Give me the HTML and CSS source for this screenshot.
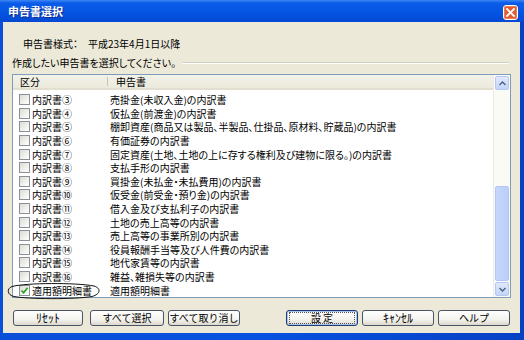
FILE: index.html
```html
<!DOCTYPE html>
<html lang="ja">
<head>
    <meta charset="UTF-8">
    <title>申告書選択</title>
    <link rel="stylesheet" href="styles.css">
</head>
<body>
    <div class="window">
        <!-- タイトルバー -->
        <div class="titlebar">
            <span class="title">申告書選択</span>
            <svg class="close" width="15" height="15" viewBox="0 0 15 15">
                <rect x="0.5" y="0.5" width="14" height="14" rx="2.5" fill="#e35b31" stroke="#fff"/>
                <rect x="1.5" y="1.5" width="12" height="12" rx="1.5" fill="none" stroke="#ef8a62" stroke-width="0.8"/>
                <path d="M4 4 L11 11 M11 4 L4 11" stroke="#fff" stroke-width="1.8" stroke-linecap="round"/>
            </svg>
        </div>

        <div class="client">
            <div class="info">
                <span class="info-label">申告書様式：</span>
                <span>平成23年4月1日以降</span>
            </div>
            <div class="prompt">
                <span>作成したい申告書を選択してください。</span>
                <div class="groove"></div>
            </div>

            <!-- 申告書一覧 -->
            <div class="listbox">
                <div class="list-main">
                    <div class="list-head">
                        <div class="head-kubun">区分</div>
                        <div class="head-name">申告書</div>
                    </div>
                    <div class="rows">
                        <div class="row"><span class="check"></span><span class="kubun">内訳書③</span><span class="name">売掛金(未収入金)の内訳書</span></div>
                        <div class="row"><span class="check"></span><span class="kubun">内訳書④</span><span class="name">仮払金(前渡金)の内訳書</span></div>
                        <div class="row"><span class="check"></span><span class="kubun">内訳書⑤</span><span class="name">棚卸資産(商品又は製品、半製品、仕掛品、原材料、貯蔵品)の内訳書</span></div>
                        <div class="row"><span class="check"></span><span class="kubun">内訳書⑥</span><span class="name">有価証券の内訳書</span></div>
                        <div class="row"><span class="check"></span><span class="kubun">内訳書⑦</span><span class="name">固定資産(土地、土地の上に存する権利及び建物に限る。)の内訳書</span></div>
                        <div class="row"><span class="check"></span><span class="kubun">内訳書⑧</span><span class="name">支払手形の内訳書</span></div>
                        <div class="row"><span class="check"></span><span class="kubun">内訳書⑨</span><span class="name">買掛金(未払金・未払費用)の内訳書</span></div>
                        <div class="row"><span class="check"></span><span class="kubun">内訳書⑩</span><span class="name">仮受金(前受金・預り金)の内訳書</span></div>
                        <div class="row"><span class="check"></span><span class="kubun">内訳書⑪</span><span class="name">借入金及び支払利子の内訳書</span></div>
                        <div class="row"><span class="check"></span><span class="kubun">内訳書⑫</span><span class="name">土地の売上高等の内訳書</span></div>
                        <div class="row"><span class="check"></span><span class="kubun">内訳書⑬</span><span class="name">売上高等の事業所別の内訳書</span></div>
                        <div class="row"><span class="check"></span><span class="kubun">内訳書⑭</span><span class="name">役員報酬手当等及び人件費の内訳書</span></div>
                        <div class="row"><span class="check"></span><span class="kubun">内訳書⑮</span><span class="name">地代家賃等の内訳書</span></div>
                        <div class="row"><span class="check"></span><span class="kubun">内訳書⑯</span><span class="name">雑益、雑損失等の内訳書</span></div>
                        <div class="row">
                            <span class="check checked">
                                <svg width="9" height="9" viewBox="0 0 9 9"><path d="M1.5 4.5 L3.6 6.8 L7.6 1.8" fill="none" stroke="#21a121" stroke-width="1.6"/></svg>
                            </span>
                            <span class="kubun">適用額明細書</span><span class="name">適用額明細書</span>
                        </div>
                    </div>
                </div>

                <!-- スクロールバー -->
                <div class="scrollbar">
                    <div class="sb-btn">
                        <svg width="7" height="5" viewBox="0 0 7 5"><path d="M0.5 4 L3.5 1 L6.5 4" fill="none" stroke="#4d6185" stroke-width="1.4"/></svg>
                    </div>
                    <div class="sb-track"><div class="sb-thumb"></div></div>
                    <div class="sb-btn">
                        <svg width="7" height="5" viewBox="0 0 7 5"><path d="M0.5 1 L3.5 4 L6.5 1" fill="none" stroke="#4d6185" stroke-width="1.4"/></svg>
                    </div>
                </div>
            </div>

            <div class="buttons">
                <div class="btn-group">
                    <button class="btn btn-reset hankaku">ﾘｾｯﾄ</button>
                    <button class="btn btn-wide">すべて選択</button>
                    <button class="btn">すべて取り消し</button>
                </div>
                <div class="btn-group">
                    <button class="btn btn-default"><span class="focus">設 定</span></button>
                    <button class="btn hankaku">ｷｬﾝｾﾙ</button>
                    <button class="btn">ヘルプ</button>
                </div>
            </div>
        </div>

        <!-- 手書きの丸印 -->
        <svg class="mark" width="96" height="18" viewBox="0 0 96 18">
            <path d="M6 4.5 C20 0.8 70 0.5 88 4 C95 6 95 12 86 14.5 C68 17.5 22 17.2 8 14.5 C1 13 0.5 6.5 6 4.5" fill="none" stroke="#111" stroke-width="1"/>
        </svg>
    </div>
</body>
</html>
```

FILE: styles.css
```css
/* 全体 */
body {
    margin: 0;
    font-family: "Noto Sans CJK JP", sans-serif;
    font-size: 10px;
    color: #000;
}

.window {
    position: relative;
    width: 524px;
    height: 340px;
    display: flex;
    flex-direction: column;
    background: linear-gradient(to right, #0a4fd8, #0752e0 50%, #0641c4);
}

/* タイトルバー */
.titlebar {
    height: 22px;
    display: flex;
    align-items: center;
    justify-content: space-between;
    padding: 0 6px 0 8px;
    background: linear-gradient(#3d86f4 0, #0a5ce8 3px, #0555e2 55%, #0448d2 100%);
}

.title {
    color: #fff;
    font-weight: bold;
    font-size: 11px;
    text-shadow: 1px 1px 0 #0b2a8a;
}

.close {
    display: block;
    margin-top: 3px;
}

/* クライアント領域 */
.client {
    flex: 1;
    margin: 0 4px 7px 3px;
    padding: 15px 0 7px 0;
    background-color: #ece9d8;
    display: flex;
    flex-direction: column;
}

.info {
    height: 14px;
    line-height: 14px;
    padding-left: 20px;
    display: flex;
    font-feature-settings: "palt";
}

.info-label {
    width: 65px;
}

.prompt {
    height: 14px;
    line-height: 14px;
    margin-top: 5px;
    padding-left: 9px;
    display: flex;
    align-items: center;
    font-feature-settings: "palt";
}

.groove {
    flex: 1;
    margin: 0 11px 0 6px;
    border-top: 1px solid #d0d0bf;
    border-bottom: 1px solid #fff;
}

/* 一覧 */
.listbox {
    height: 224px;
    margin: 4px 9px 0 9px;
    box-sizing: border-box;
    border: 1px solid #7f9db9;
    background-color: #fff;
    display: flex;
}

.list-main {
    flex: 1;
    overflow: hidden;
}

.list-head {
    height: 15px;
    display: flex;
    background: linear-gradient(#f3f2ea, #ebeadb);
    border-bottom: 2px solid #e2dfd0;
    box-sizing: border-box;
    line-height: 13px;
}

.head-kubun {
    width: 87px;
    padding-left: 7px;
    border-right: 1px solid #c7c5b2;
    margin: 2px 0;
    line-height: 9px;
}

.head-name {
    padding-left: 8px;
}

.rows {
    padding-top: 3px;
}

.row {
    height: 13.6px;
    display: flex;
    align-items: center;
    white-space: nowrap;
}

.check {
    width: 11px;
    height: 11px;
    margin-left: 6px;
    margin-right: 2px;
    box-sizing: border-box;
    border: 1px solid #8b8f98;
    background: linear-gradient(135deg, #dcdcd4, #fff);
    display: flex;
    align-items: center;
    justify-content: center;
}

.kubun {
    width: 78px;
}

.name {
    font-feature-settings: "palt";
}

/* スクロールバー */
.scrollbar {
    width: 17px;
    display: flex;
    flex-direction: column;
    background-color: #fbfbf6;
    border-left: 1px solid #eeede5;
    box-sizing: border-box;
}

.sb-btn {
    height: 12px;
    margin: 1px 1px;
    border: 1px solid #b5c8f2;
    border-radius: 2px;
    background: linear-gradient(#e0e9fd, #c4d5fa);
    display: flex;
    align-items: center;
    justify-content: center;
}

.sb-track {
    flex: 1;
    display: flex;
    flex-direction: column;
    justify-content: flex-end;
}

.sb-thumb {
    height: 93px;
    margin: 0 1px;
    border: 1px solid #b1c6f4;
    border-radius: 2px;
    background: linear-gradient(to right, #c6d6fb, #bccffa);
}

/* ボタン */
.buttons {
    height: 16px;
    margin: 12px 10px 0 10px;
    display: flex;
    justify-content: space-between;
}

.btn-group {
    display: flex;
    gap: 4px;
}

.btn {
    width: 72px;
    height: 16px;
    padding: 0;
    font-family: "Noto Sans CJK JP", sans-serif;
    font-size: 10px;
    line-height: 14px;
    color: #000;
    border: 1px solid #4a5368;
    border-radius: 3px;
    background: linear-gradient(#ffffff, #f4f3ee 60%, #dcd8cc);
}

.hankaku {
    font-size: 12px;
}

.btn-reset {
    width: 70px;
    margin-right: 3px;
}

.btn-wide {
    width: 74px;
}

.btn-default {
    border-color: #203a70;
    box-shadow: inset 0 0 0 1px #a8c4f0;
}

.focus {
    display: block;
    margin: 1px 2px;
    border: 1px dotted #555;
    line-height: 10px;
}

/* 注記の丸印 */
.mark {
    position: absolute;
    left: 6px;
    top: 282px;
}
```
